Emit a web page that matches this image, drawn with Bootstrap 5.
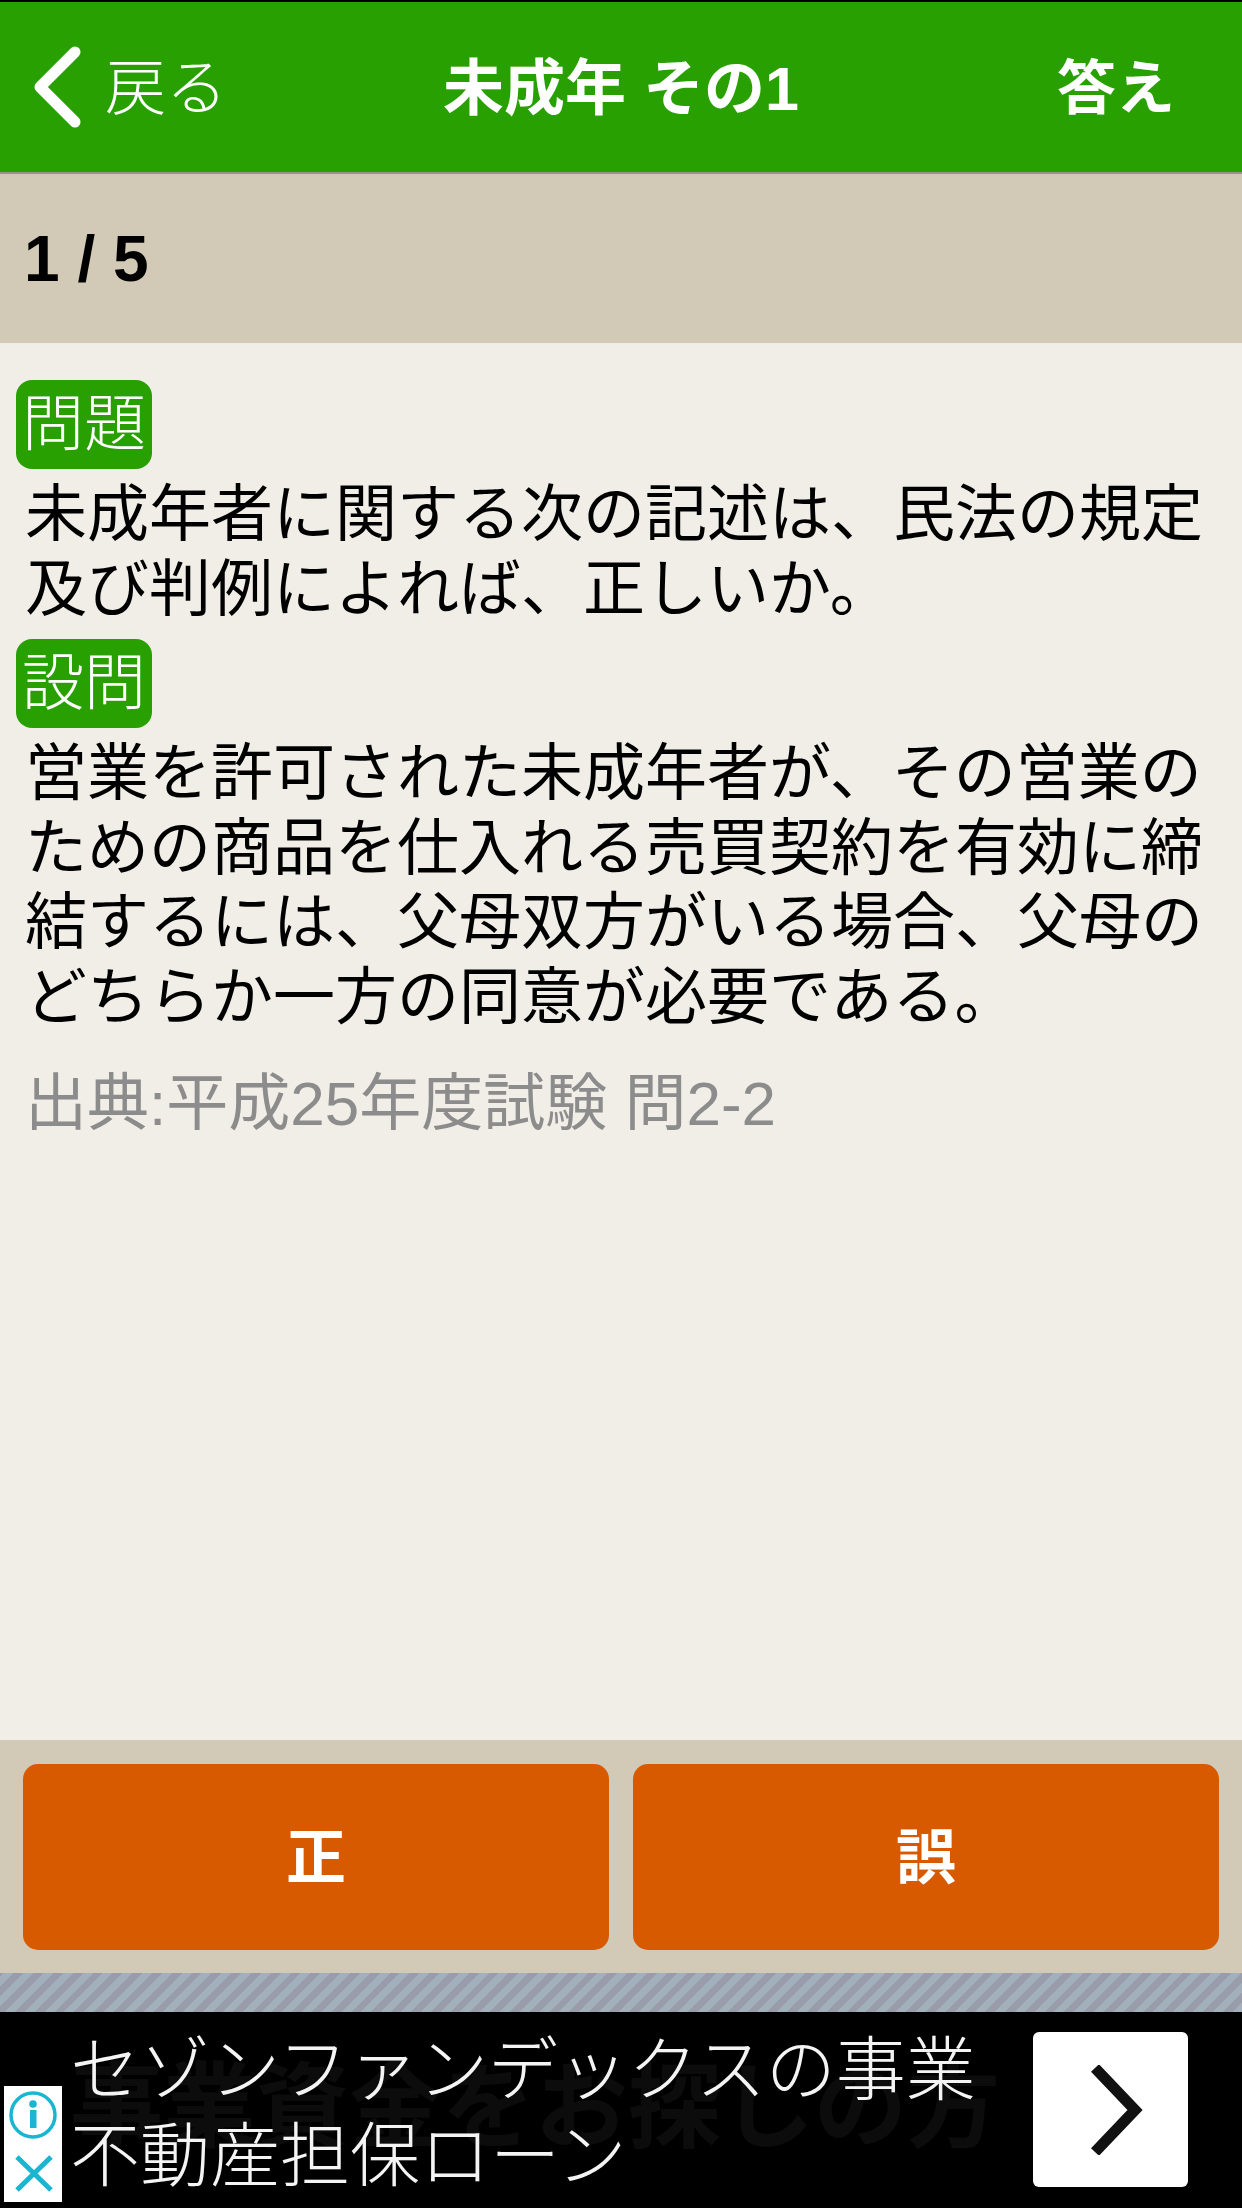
<!DOCTYPE html>
<html lang="ja">
<head>
  <meta charset="UTF-8">
  <title>未成年 その1</title>
  <meta name="viewport" content="width=device-width, initial-scale=1.0">
  <link href="https://cdn.jsdelivr.net/npm/bootstrap@5.3.0/dist/css/bootstrap.min.css" rel="stylesheet">
  <style>
    html, body { height: 100%; }
    body { font-family: "Liberation Sans", "Noto Sans CJK JP", sans-serif; background-color: #f1eee7; color: #000; }
    .app-screen { height: 2208px; }
    .top-bar { height: 174px; padding-top: 4px; background-color: #29a002; border-top: 2px solid #000; border-bottom: 2px solid #98928a; color: #fff; }
    .top-side { flex: 1 1 0; }
    .back-icon { margin: 0 0 4px 33px; flex-shrink: 0; }
    .back-text { font-size: 61px; font-weight: 300; line-height: 1; margin-left: 24px; }
    .top-title { font-size: 61px; font-weight: 700; line-height: 1; }
    .answer-text { font-size: 59px; font-weight: 700; line-height: 1; margin-right: 67px; }
    .count-bar { height: 169px; padding-left: 24px; background-color: #d2cab7; font-size: 64px; font-weight: 700; }
    .quiz-body { padding: 37px 16px 0; }
    .tag-label { width: 136px; height: 89px; border-radius: 16px; background-color: #29a002; color: #fff; font-size: 62px; font-weight: 300; line-height: 1; }
    .quiz-text { margin: 0; padding: 9px 9px 0; font-size: 62px; line-height: 74.5px; }
    .tag-gap { margin-top: 12px; }
    .source-text { margin: 34px 0 0; padding-left: 9px; font-size: 62px; line-height: 70px; color: #8c8c8c; }
    .answer-bar { height: 233px; padding: 24px 23px 0; gap: 24px; background-color: #d2cab7; }
    .answer-btn { flex: 1 1 0; height: 186px; padding-top: 10px; border: 0; border-radius: 15px; background-color: #d75a00; color: #fff; font-size: 60px; font-weight: 700; }
    .stripe-bar { height: 39px; background: repeating-linear-gradient(-45deg, #a2b0bb 0 7px, #999ca9 7px 14px); }
    .ad-bar { height: 196px; background-color: #000; color: #fff; }
    .ad-ghost { position: absolute; left: 70px; top: 50px; font-size: 93px; font-weight: 700; line-height: 1; color: #0c0c0c; white-space: nowrap; }
    .ad-copy { position: relative; padding: 16px 0 0 70px; font-size: 70px; font-weight: 300; line-height: 86px; white-space: nowrap; color: #f4f4f4; }
    .ad-info { position: absolute; left: 4px; top: 74px; width: 58px; height: 116px; background-color: #fff; }
    .ad-next { position: absolute; left: 1033px; top: 20px; width: 155px; height: 155px; border-radius: 6px; background-color: #fff; }
  </style>
</head>
<body>

<div class="app-screen d-flex flex-column">
  <header class="top-bar d-flex align-items-center">
    <div class="top-side d-flex align-items-center">
      <svg class="back-icon" width="48" height="82" viewBox="0 0 48 82" fill="none" stroke="#fff" stroke-width="11" stroke-linecap="round" stroke-linejoin="round"><path d="M42 6 L7 41 L42 76"/></svg>
      <span class="back-text">戻る</span>
    </div>
    <div class="top-title">未成年 その1</div>
    <div class="top-side text-end"><div class="answer-text">答え</div></div>
  </header>

  <div class="count-bar d-flex align-items-center">1 / 5</div>

  <main class="quiz-body flex-grow-1">
    <div class="tag-label d-flex align-items-center justify-content-center">問題</div>
    <p class="quiz-text">未成年者に関する次の記述は、民法の規定及び判例によれば、正しいか。</p>
    <div class="tag-label tag-gap d-flex align-items-center justify-content-center">設問</div>
    <p class="quiz-text">営業を許可された未成年者が、その営業のための商品を仕入れる売買契約を有効に締結するには、父母双方がいる場合、父母のどちらか一方の同意が必要である。</p>
    <p class="source-text">出典:平成25年度試験 問2-2</p>
  </main>

  <div class="answer-bar d-flex align-items-start">
    <button type="button" class="btn answer-btn">正</button>
    <button type="button" class="btn answer-btn">誤</button>
  </div>

  <div class="stripe-bar"></div>

  <div class="ad-bar position-relative overflow-hidden">
    <div class="ad-ghost">事業資金をお探しの方</div>
    <div class="ad-copy">セゾンファンデックスの事業<br>不動産担保ローン</div>
    <div class="ad-info">
      <svg width="58" height="116" viewBox="0 0 58 116" fill="none">
        <circle cx="29" cy="29" r="22" stroke="#19b5d1" stroke-width="3.5"/>
        <circle cx="29" cy="18" r="3.8" fill="#19b5d1"/>
        <rect x="26" y="24" width="6.5" height="18" fill="#19b5d1"/>
        <path d="M13 71 L47 104 M47 71 L13 104" stroke="#19b5d1" stroke-width="5"/>
      </svg>
    </div>
    <div class="ad-next d-flex align-items-center justify-content-center">
      <svg class="ms-2" width="56" height="90" viewBox="0 0 56 90" fill="none" stroke="#111" stroke-width="11"><path d="M8 3 L48 45 L8 87"/></svg>
    </div>
  </div>
</div>

<script src="https://cdn.jsdelivr.net/npm/bootstrap@5.3.0/dist/js/bootstrap.bundle.min.js"></script>
</body>
</html>
